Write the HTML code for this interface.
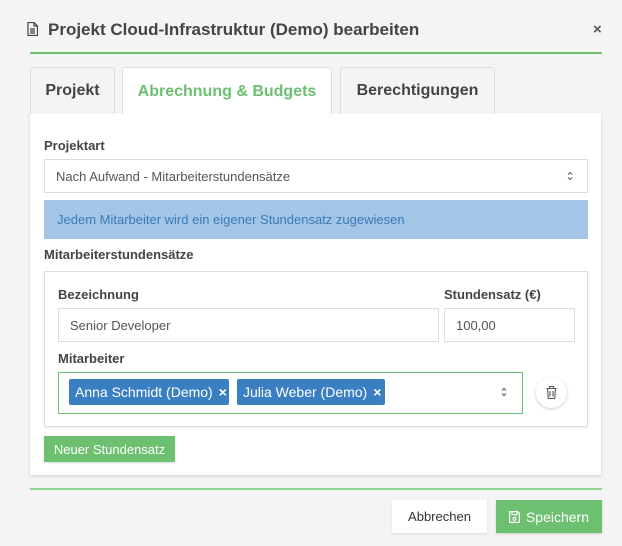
<!DOCTYPE html>
<html><head><meta charset="utf-8"><style>
*{box-sizing:border-box;margin:0;padding:0}
body{width:622px;height:546px;background:#f4f4f4;font-family:"Liberation Sans",sans-serif;position:relative;overflow:hidden;color:#444}
.a{position:absolute}
.lbl{font-size:13px;font-weight:bold;color:#444}
.inp{background:#fff;border:1px solid #ddd;font-size:13px;color:#555;padding-left:11px;display:flex;align-items:center}
.tab{top:67px;height:47px;border:1px solid #ddd;border-bottom:none;font-size:16px;font-weight:bold;display:flex;align-items:center;justify-content:center;border-radius:3px 3px 0 0}
.tag{top:379px;height:26px;background:#3a7fc1;color:#fff;font-size:14px;display:flex;align-items:center;padding-left:6px;border-radius:2px}
</style></head><body>
<svg class="a" style="left:27px;top:22px" width="11" height="14" viewBox="0 0 11 14"><path d="M1 .5h6l3.5 3.5v9.5h-9.5z M7 .5v3.5h3.5 M3 7h5 M3 9h5 M3 11h5" fill="none" stroke="#444" stroke-width="1.2"/></svg>
<div class="a" style="left:48px;top:20px;font-size:17px;font-weight:bold;color:#444">Projekt Cloud-Infrastruktur (Demo) bearbeiten</div>
<div class="a" style="left:593px;top:21px;font-size:15px;color:#555;font-weight:bold">×</div>
<div class="a" style="left:30px;top:52px;width:572px;height:2px;background:#6cc070"></div>
<div class="a" style="left:30px;top:113px;width:571px;height:362px;background:#fff;box-shadow:0 1px 3px rgba(0,0,0,.15)"></div>
<div class="a tab" style="left:30px;width:85px;background:#f4f4f4;color:#444">Projekt</div>
<div class="a tab" style="left:122px;width:210px;height:48px;background:#fff;color:#6cc070">Abrechnung &amp; Budgets</div>
<div class="a tab" style="left:340px;width:155px;background:#f4f4f4;color:#444">Berechtigungen</div>
<div class="a lbl" style="left:44px;top:138px">Projektart</div>
<div class="a inp" style="left:44px;top:159px;width:544px;height:34px">Nach Aufwand - Mitarbeiterstundensätze</div>
<svg class="a" style="left:567px;top:171px" width="6" height="10" viewBox="0 0 6 10"><path d="M1 3.5l2-2 2 2 M1 6.5l2 2 2-2" fill="none" stroke="#555" stroke-width="1"/></svg>
<div class="a" style="left:44px;top:200px;width:544px;height:39px;background:#a4c6e6;color:#3a7ab8;font-size:13px;padding-left:13px;display:flex;align-items:center">Jedem Mitarbeiter wird ein eigener Stundensatz zugewiesen</div>
<div class="a lbl" style="left:44px;top:247px">Mitarbeiterstundensätze</div>
<div class="a" style="left:44px;top:271px;width:544px;height:156px;border:1px solid #ddd;box-shadow:0 1px 2px rgba(0,0,0,.08)"></div>
<div class="a lbl" style="left:58px;top:287px">Bezeichnung</div>
<div class="a lbl" style="left:444px;top:287px">Stundensatz (€)</div>
<div class="a inp" style="left:58px;top:308px;width:381px;height:34px">Senior Developer</div>
<div class="a inp" style="left:444px;top:308px;width:131px;height:34px">100,00</div>
<div class="a lbl" style="left:58px;top:351px">Mitarbeiter</div>
<div class="a" style="left:58px;top:372px;width:465px;height:42px;border:1px solid #6cc070;background:#fff"></div>
<div class="a tag" style="left:69px;width:160px">Anna Schmidt (Demo) <b style="margin-left:6px">×</b></div>
<div class="a tag" style="left:237px;width:148px">Julia Weber (Demo) <b style="margin-left:6px">×</b></div>
<svg class="a" style="left:501px;top:387px" width="6" height="10" viewBox="0 0 6 10"><path d="M1 3.5l2-2 2 2 M1 6.5l2 2 2-2" fill="none" stroke="#555" stroke-width="1"/></svg>
<div class="a" style="left:536px;top:377px;width:31px;height:31px;border-radius:50%;background:#fff;box-shadow:0 1px 3px rgba(0,0,0,.2)"></div>
<svg class="a" style="left:546px;top:386px" width="11" height="13" viewBox="0 0 11 13"><path d="M.5 2.5h10 M3.5 2.5v-2h4v2 M1.5 2.5l.8 10h6.4l.8-10 M4 5v5.5 M7 5v5.5" fill="none" stroke="#555" stroke-width="1.1"/></svg>
<div class="a" style="left:44px;top:436px;width:131px;height:26px;background:#6cc070;color:#fff;font-size:13px;display:flex;align-items:center;justify-content:center;box-shadow:0 1px 2px rgba(0,0,0,.15)">Neuer Stundensatz</div>
<div class="a" style="left:30px;top:488px;width:572px;height:2px;background:#8fd493"></div>
<div class="a" style="left:392px;top:500px;width:95px;height:33px;background:#fff;font-size:13px;color:#333;display:flex;align-items:center;justify-content:center;box-shadow:0 1px 2px rgba(0,0,0,.1)">Abbrechen</div>
<div class="a" style="left:496px;top:500px;width:106px;height:33px;background:#6cc070;color:#fff;font-size:14px;display:flex;align-items:center;justify-content:center;box-shadow:0 1px 2px rgba(0,0,0,.15)"><svg width="11" height="12" viewBox="0 0 11 12" style="margin-right:6px"><path d="M.6.6h8l1.8 1.8v9h-9.8z M3 .6v3h5v-3" fill="none" stroke="#fff" stroke-width="1.2"/><circle cx="5.5" cy="7.8" r="1.5" fill="none" stroke="#fff" stroke-width="1.1"/></svg>Speichern</div>
</body></html>
